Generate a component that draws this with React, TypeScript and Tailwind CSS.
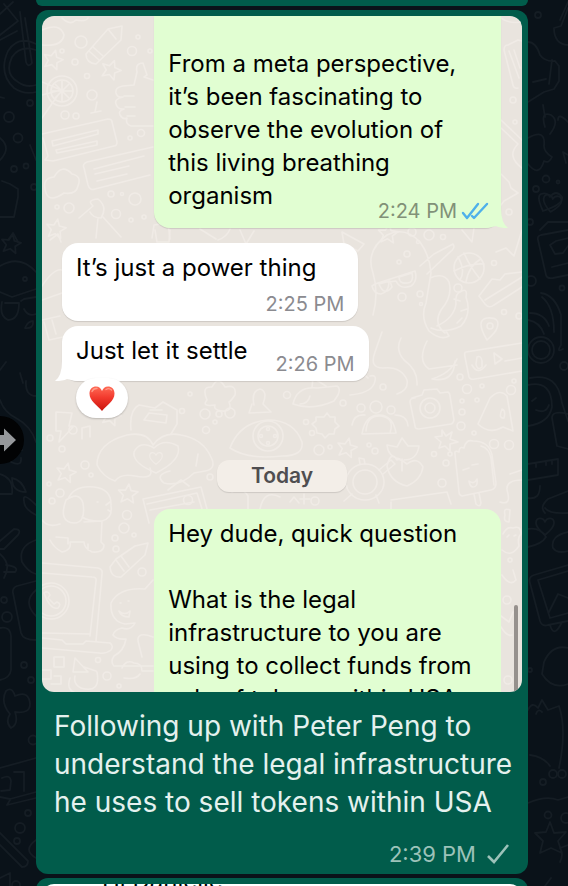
import type { ReactNode } from "react";

type Spot = [number, number, number?];

const STAR =
  "M0-10 2.8-3.6 9.8-3 4.5 1.6 6.2 8.4 0 4.8-6.2 8.4-4.5 1.6-9.8-3-2.8-3.6Z";
const HEART = "M0 9C-5 5-9 1-9-3-9-9-2-9 0-4 2-9 9-9 9-3 9 1 5 5 0 9Z";

function Dots({ spots }: { spots: Spot[] }) {
  return (
    <>
      {spots.map(([x, y, r], i) => (
        <circle key={i} cx={x} cy={y} r={r ?? 3} />
      ))}
    </>
  );
}

function Shapes({ d, spots }: { d: string; spots: Spot[] }) {
  return (
    <>
      {spots.map(([x, y, turn], i) => (
        <path key={i} d={d} transform={`translate(${x} ${y}) rotate(${turn ?? 0})`} />
      ))}
    </>
  );
}

function DarkWallpaper() {
  return (
    <svg
      aria-hidden="true"
      className="absolute inset-0 h-full w-full fill-none stroke-[#151d24]"
      viewBox="0 0 568 886"
      preserveAspectRatio="xMidYMin slice"
      strokeWidth="1.8"
      strokeLinecap="round"
      strokeLinejoin="round"
    >
      <path d="M0 14 13 2M0 35 18 21 4 4M20 12l6 50q2 6 6 1L25 18M0 40 17 31M36 44Q18 35 8 51-2 73 14 88q10 7 22 4M36 50Q20 45 12 57 4 74 18 82q8 6 18 3M0 97l4 1M0 138q12 10 0 22M2 181l8 3 8 5v8l-4 20H0M8 240l5-7 5 9M30 145l6 15" />
      <path d="M0 266q20-12 36 6M0 292l12 5 24-8M2 302q-3 14 6 18 11 0 11-17L5 303M21 301l3-2 12-2M24 309q4 8 12 5M25 328q3-7 8-7 1 8-8 7M0 370l6-8M20 373l3 10M36 396q-11 0-10-15M0 400q4 12 16 18 15 8 20 24M22 450q-14 0-11 12 11 5 10-4M0 474q14 4 12 20H0M12 478q10 2 14 14-14 0-14-14M36 505q-14-14-12-4 0 8 12 14M0 541l14-12q8 0 4 6L4 549H0M0 554q12 10 4 24M36 540q-18 6-14 22 6 10 14 12M6 565q14 2 9 7H4" />
      <path d="M36 581 17 586q-5 2-4 7l8 40q2 7 15 7M36 590q-14 12 0 26M0 628q10-2 11 8v34q-1 8-11 10M10 714Q0 702 6 691q6-5 9 5 14-6 15 8 0 10-15 8 4 12-4 16-6-6-1-14M0 768l36-10M0 797l10 2 26-7M2 778q8-4 9 3l-1 9-9 1M14 772h10v19M10 800l-3 5 29-7M0 845l22 22q6 0 6-6L0 833M0 878l10-5v13M36 840q-14 10 0 18" />
      <path d="M528 42q8 0 12 13 5 7 15 6l4 5v15l-5 8-10 3-16 10M533 82l13-3M552 60l-3 24M568 8l-7 18-7 2q0 16 14 17M568 2l-8 18M545 127q-5-16 6-12 9 6-1 19M568 122q-10-10-10-2M528 138q18-10 16 8 0 6 8 11-3 7-8 4-5 17-16 3M568 155l-5-3 3 11M543 211q-7-15-2-17 6-2 9 3 6-8 12 0 2 7-19 14M540 230l8-8h20" />
      <path d="M568 230l-27 5q-4 1-3 5l8 35q1 4 7 3l15-3M568 238l-12 3-6 4 5 9 8-1 5-7M552 267l16-4M541 293q14 2 20 22l0 30q-5 8 2 4M542 297q12 10 12 35M530 313q14 0 19 13M528 320q12 2 16 14M530 378q28-6 32 25l6 18M528 385q24-5 24 22-3 16-24 19M532 401l4-3M536 410q10 4 13-5M568 414q-16-4-16 4l5 28 11 3M528 464l30-5v16l-30 5M536 463v4M546 461v4M552 460v4M528 498q12 2 12-12M545 513q-6-6 3-14l20-8M545 508q4 6 23 5" />
      <path d="M528 547q14-3 18-10-6-10-18-8M568 532q-18 4-15 16 4 6 15 3M568 565l-34 10q-6 2-4 8l10 38q2 6 8 4l20-4M568 571l-30 9 12 38 18-5M549 612l9-18 10 4M550 625q4 14 12-3M568 648q-16-4-24 14l-2 12q10 16 26 10M528 710q4-9 10-2l4-8 6 10 11-4q8 24 0 62M536 714q2-6 6-2M530 755q14 2 20 11M528 803q18-8 30-3l10-3M550 822l4 11 12-1-8 9 4 12-11-5-11 5 3-12-8-8 11-1ZM560 862q4-8 0-14l8-3M551 878q-6 8-6 8M543 105l2 12" />
      <Shapes d={STAR} spots={[[11, 244, 10]]} />
      <Shapes d={HEART} spots={[[552, 203, 10], [545, 526]]} />
      <circle cx="541" cy="350" r="13" />
      <circle cx="541" cy="350" r="9" />
      <Dots
        spots={[
          [9, 117, 5], [30, 103], [18, 138, 4.5], [14, 169], [26, 166, 2.5], [34, 187], [4, 600], [7, 617, 5],
          [24, 665], [31, 680], [33, 740, 4.5], [28, 813], [20, 828, 5], [17, 841], [25, 279, 2], [16, 885, 4],
          [538, 15, 3], [546, 179, 3.5], [536, 189], [558, 182, 1.5], [530, 222], [531, 281, 5], [562, 288, 2.5],
          [564, 366, 4], [562, 774, 4], [543, 782], [553, 774, 4], [548, 815, 3.5], [566, 818, 5], [530, 670, 2],
        ]}
      />
    </svg>
  );
}

function LightWallpaper() {
  return (
    <svg
      aria-hidden="true"
      className="absolute inset-0 h-full w-full fill-none stroke-[#f0ebe6]"
      viewBox="42 16 480 676"
      preserveAspectRatio="xMidYMin slice"
      strokeWidth="1.6"
      strokeLinecap="round"
      strokeLinejoin="round"
    >
      {/* crayon, thumb, unicycle and chat notes */}
      <path d="M86 54l22-25 14-3-1 14-25 24q-10-1-10-10ZM89 51l10 9M93 47l10 9M108 29l8 10M62 18q8 8 14 2 10 2 12-2M42 30q18-8 22 5-2 12-22 10M153 80l-9-3 3-2-4-12q-8 0-6 9l-3 13-11 1q-8 1-7 7 1 5 7 4-9 2-7 7 2 6 8 5-6 2-4 6 3 5 7 3-2 6 4 8l22 0M124 96h10M125 107h10M127 116h8" />
      <circle cx="62" cy="91" r="15" />
      <circle cx="62" cy="91" r="11" />
      <path d="M62 81v20M52 91h20M55 84l14 14M69 84 55 98M42 82l19 8-19 5M58 95 42 118M97 102l-2 10M91 113l10-2M42 134l66-15q4 0 4 3l5 20q0 4-3 4l-61 15-8-1 3-4-5-18M52 141l46-11v4l-45 12ZM56 150l41-9v4l-40 8ZM153 147l-66 15q-5 2-3 6l4 17q2 6 7 4l55-14M94 169l50-13M95 174l34-8M97 181l30-7M46 193q-5-15 8-16 8-14 18-3 10 2 6 12-2 9-14 7-14 10-18 0M79 218l14-12q-7-6 5-7 10 8 3 19-8 0-11-6M98 218l-2 20M103 217l18 20M152 238l2-13 14-2 2 16" />
      {/* right edge beside the outgoing bubble */}
      <path d="M501 18q8 6 21 4M508 45l10-5 4 1M508 45q-4 0-4 5l9 35q1 4 5 3M509 51l10 27M514 50l6 18M501 120l21 20M501 128l17 16q-12 12 4 24M501 174l8 8 2 6 7 5-14 8-3 4M200 229l16 10M230 229q-3 8-12 11" />
      {/* slice, octopus with glasses, ball and shoe */}
      <path d="M342 232l22 12-6 7-14-7ZM462 230l10 12 2-14M496 252l10-4 8 8 8-26M373 315q6-22 0-42-8-22 14-38 18-9 33 7 10 14 11 31l-5 30q-6 14 3 28 12 10 20 5M375 284l40-13q3 10-4 15-11 4-15-5l-7 1q0 10-8 12-7 0-9-8ZM379 284l11-3 2 6q-8 10-13-3M399 277l13-4q2 10-5 10-8 1-8-6M420 266l14-12 19-10q3 4-4 9l-22 21M430 278q14-6 19 4 4 14-8 28-8 14 4 23M431 328q14 6 30-2 11-12 5-29 2-10-6-5-5 2-4 12-2 14-19 22M454 299l6 2M461 311l6-2M457 323l5-5M449 336l-3-5M382 332l-7 20q-6 16 8 16 18-2 24 12 2 10-10 14M401 338q-6 12 3 22 14 10 13 25M368 364q-8 8 0 14M350 395q20-2 24-11 4-10-4-8M427 341q-10 20 2 28l28-4M457 359q-6 14-25 20 22 4 23-18" />
      <circle cx="469" cy="268" r="15" />
      <path d="M454 271q16-8 30-7M464 253q6 14 16 26M458 257q8 14 2 23M481 259q-12 6-15 23M479 296l13-17 8 1 5-6 17-2M479 296l6 8q4 5 9 1l28-18M485 300l37-23M487 340q-12-20 0-22 14-1 10 10-1 4-10 12M522 343l-56 9q-2 0-1 5l4 20q1 3 6 2l47-8M494 353l8 6-7 5ZM477 357q4-2 5 4v6q-5 4-6-3ZM472 365q6 11 14 0M505 361l17-3" />
      <circle cx="490" cy="326" r="3" />
      {/* left margin */}
      <path d="M42 320l18-4M44 322l5 18 14-3M52 320l4 14M42 286q12-18 20-16M42 300l20-7M50 240l8-6 3 8M155 230l2 12 12 0 1-12M240 230l6 14 8-13" />
      {/* fish, friends, camera and bell */}
      <path d="M293 404q4-18 24-16l20-2q4 2 1 9l-4 6q-22 10-41 3M312 387l1-9 13 8M300 404q8 0 10-8M366 431q1-16 15-15 14 2 9 17M362 434q3-19 17-19t17 18ZM352 425q2-11 13-10M395 415q12 0 13 11M412 398l10-3 2-5 13-1 3 4 8-1q2 1 2 4l4 24q-1 4-3 4l-32 5q-4 0-4-3l-5-24q0-4 5-4M478 424l12-26q10-10 17-2l6 35-10-4q-14 8-25-3M502 409q4 1 2 9-6 1-2-9M131 430q-2-20 8-25l16 3 8-6 14 8v14l-6 10M207 400q-6-14 5-13 6-12 13 0 12-3 10 8-4 6-6 7 4 10-7 9-9-1-7-6-14 2-8-5M150 410h12M144 420l22 3 1-8-18-2ZM56 412l16 1-3 13 4 1-14 15 2-11-5 0ZM82 428l8-2v11M82 428v11M254 405q-3-14 6-16 8 2 3 15l8 8-22 1 3-9" />
      <circle cx="376" cy="407" r="6" />
      <circle cx="361" cy="408" r="4" />
      <circle cx="391" cy="410" r="4" />
      <circle cx="430" cy="408" r="10" />
      <circle cx="430" cy="408" r="5" />
      <circle cx="268" cy="436" r="15" />
      <circle cx="268" cy="436" r="10" />
      <Dots spots={[[268, 429, 1.5], [275, 436, 1.5], [261, 436, 1.5], [268, 443, 1.5]]} />
      <path d="M230 448q10-26 38-28 26 0 34 22 2 14-20 14-34 4-52-8M324 417l3-4 3 4 5 0 0 5 4 4-4 3-1 5-5 0-4 4-3-4-5-1-1-5-4-4 4-3 0-4ZM442 430l4 6 6-4-2 7 8 3-8 2 0 7-5-5-6 2 2-6-6-5 7-1ZM400 459q-12-2-13-14l10 2 5-9 6 8 11 0q-2 14-15 14M402 459v12M397 460q-6-10-10 6 3 16 20 20 14-6 16-19-6-11-16-3-8-6-10-4" />
      {/* hands holding a heart */}
      <path d="M97 465q0-22 30-30 20-4 26 10 10-14 28-10 22 4 30 22 6 12-6 14l-11 2q-14 14-30 10-10-8 6-12M97 465q6 12 18 16 6-8 20-5 20 4 15-8" />
      <path d={HEART} transform="translate(156 458) scale(.7)" />
      <path d="M134 452q6-12 20-4 10-10 24-2 4 14-22 27-24-10-22-21" />
      {/* puppy, easel, lifebuoy, ice lolly */}
      <path d="M68 499q6-14 26-12 18 2 17 19 2 12-9 15-12 1-20-4M66 500q-8 22 8 23 12 0 9-20-4-12-17-3M97 502h1M106 505l4-3M108 510l3 2M42 520q6 8 18 4M84 522l18-1-1 21 3 3q0 8-12 7-8-4-8-10l-14 0q2 8-8 10-8-4-12-12M56 537l12 1v6M88 544v6M143 499l58-12 6 22M147 504l50-11 5 16M143 499l6 24M168 490l13-10 8 6M150 510l44-8" />
      <ellipse cx="365" cy="482" rx="19" ry="18" />
      <ellipse cx="365" cy="482" rx="12" ry="12" />
      <path d="M360 464l-1-6 5 1 1 5M379 470l12-10 4 4-12 10M347 475l-8-3M352 494l-8 7M376 495l3 8M459 492l-4-38q-1-4 4-2 0-6 5-4 2-9 9-7 16 0 19 14l4 28q0 6-5 7l-29 6q-3-1-3-4ZM481 446q8 2 10 12l3 27M463 470l6-2M472 465l6-1M469 481q5 4 8-2 1 8-4 8-3 0-4-6M474 494l2 10q4 4 5-1l-2-10M391 500l56-8 4 12M391 502v7M510 474l12-4M522 480q-16 0-15 10 5 16-7 12" />
      <path d="M505 515q-2-8 5-5l-1 12q-6 0-4-7M503 534q4-8 10-6 8-3 8 6-4 4-2 12-8 12-17 4M507 537l2-2M514 536l2-1M502 575q8 12 14 5l-3-10M501 616l8 6 4-10M501 627q6 10 11 8" />
      {/* crayon, laptop and ghost */}
      <path d="M110 567l6-8 19-13 13-3-3 12-24 22q-10 1-11-10ZM116 560l8 11M121 556l8 11M42 563l56 5q5 1 4 6l-6 67M42 573l50 4q5 0 4 4l-6 55M42 633l48 1M42 638l20 2 4 4 17 0 3-3 24 2q4 3 1 7-5 4-12 3l-57-5" />
      <circle cx="51" cy="601" r="18" />
      <circle cx="51" cy="601" r="15" />
      <path d="M44 593q4-3 6 2l-2 3 6 6 3-2q5 2 1 6-8 2-14-15M153 580l-8 9q-26-2-34 14-1 18 14 21l10-1q-4 8-13 5-8 2-9 7 4 5 13 4-2 12-12 17-4 6 0 10h39M120 603h1M128 601h1M119 611q6 5 11 0l-1 6q-8 0-10-6M153 637q-16-6-15 4l4 16M54 657h10v10H54ZM42 670h9v9h-9M51 684l10 0 0-8-7 0M75 658l13 14-15 0ZM84 667l12 4M70 678q-5 14 10 16M97 672q4 22-16 16M75 676q-2 8 6 12M122 668q4-9 12-5 8 0 8 8h11M124 678q12 2 16-4" />
      <path d="M198 454l-2 12M222 464l4 24M232 492q10-6 16 4v13M260 509q4-20 20-12M290 502l4-5 5 6M300 499h10M304 494v10" />
      <Shapes
        d={STAR}
        spots={[
          [53, 60, 15], [111, 70, 20], [56, 229, 10], [388, 234, 5], [347, 448, 12], [66, 473, 12],
          [128, 494, 5], [111, 416, 15],
        ]}
      />
      <Dots
        spots={[
          [81, 42, 6], [132, 51, 4.5], [75, 62, 3], [62, 51, 2], [138, 37, 2], [150, 51, 2], [87, 76, 2.5],
          [92, 95, 5], [65, 115, 4], [76, 116, 3], [130, 138, 2], [141, 133, 3.5], [135, 199, 6], [111, 194, 3],
          [122, 194, 1.5], [69, 208, 5], [116, 214, 4.5], [57, 207, 2], [131, 220, 2], [144, 217, 2], [513, 100, 3],
          [515, 122, 2], [509, 212, 3], [412, 232, 4], [429, 235, 5], [418, 242, 1.5], [443, 237, 2.5],
          [458, 288, 4], [494, 263, 2.5], [504, 312, 2.5], [519, 316, 3], [407, 254, 3], [399, 262, 2], [420, 294, 3],
          [421, 304, 1.5], [402, 297, 4], [287, 395, 3.5], [343, 403, 3], [383, 387, 3], [460, 377, 3],
          [467, 389, 4.5], [482, 386, 2], [511, 390, 4.5], [514, 381, 2], [462, 401, 2], [462, 412, 3],
          [477, 400, 2], [461, 426, 4], [474, 433, 2], [306, 422, 2.5], [312, 433, 2.5], [205, 414, 5],
          [219, 414, 3], [230, 413, 5], [215, 422, 2], [206, 430, 3.5], [182, 411, 2.5], [190, 394, 2],
          [73, 430, 4], [50, 438, 3], [62, 449, 3], [85, 465, 4], [49, 484, 2], [60, 493, 4], [52, 501, 3],
          [91, 475, 2], [319, 450, 5], [330, 447, 2], [369, 445, 2], [375, 451, 3], [434, 454, 2.5], [494, 444, 4.5],
          [509, 445, 4.5], [446, 463, 3], [442, 483, 4], [450, 454, 2], [315, 501, 4], [127, 515, 4.5],
          [124, 528, 5], [115, 538, 3], [134, 535, 2], [116, 549, 3], [142, 572, 4], [188, 500, 4.5], [107, 676, 4],
          [119, 686, 2], [98, 660, 2.5], [510, 560, 2], [507, 600, 4], [508, 680, 4], [210, 477, 3],
        ]}
      />
    </svg>
  );
}

function Body({ children }: { children: ReactNode }) {
  return <p className="whitespace-pre text-2xl/[33px]">{children}</p>;
}

function Stamp({ children }: { children: ReactNode }) {
  return <time className="text-xl/6 text-[#8b8b90]">{children}</time>;
}

function DoubleTick() {
  return (
    <svg
      role="img"
      aria-label="Read"
      className="h-5 w-7 fill-none stroke-[#4fb0ea]"
      viewBox="0 0 28 20"
      strokeWidth="2.4"
      strokeLinecap="round"
      strokeLinejoin="round"
    >
      <path d="M2 12l4 5L17 3M11 15l2 2L26 3" />
    </svg>
  );
}

function EmojiHeart() {
  return (
    <svg role="img" aria-label="Red heart" className="h-[25px] w-[26px]" viewBox="0 0 26 25">
      <defs>
        <linearGradient id="heart" x1="0" y1="0" x2="0" y2="1">
          <stop offset="0" stopColor="#ff6a55" />
          <stop offset=".45" stopColor="#f23a2e" />
          <stop offset="1" stopColor="#c9140c" />
        </linearGradient>
      </defs>
      <path
        d="M13 25C8 19 .5 15 .5 7.500.5 3 3.500.5 7 .5c3 0 5 1.800 6 4.500 1-2.700 3-4.500 6-4.500 3.500 0 6.500 2.500 6.500 7C25.500 15 18 19 13 25Z"
        fill="url(#heart)"
      />
      <path d="M3 5.500Q4.500 2 8 2.500M17 3.500Q20 1.500 22.500 4" fill="none" stroke="#ff9a88" strokeWidth="1.400" strokeLinecap="round" />
    </svg>
  );
}

function SharedScreenshot() {
  return (
    <div className="relative aspect-[120/169] w-full overflow-hidden rounded-xl bg-[#e9e4de] text-black">
      <LightWallpaper />
      <div className="relative flex flex-col items-start pr-[21px] pl-5">
        <div className="relative w-[79%] self-end rounded-b-2xl bg-[#e1fed2] pt-[31px] pr-3 pb-[5px] pl-3.5 shadow-[0_1px_1px_#0000001f]">
          <svg aria-hidden="true" className="absolute -right-[7px] bottom-0 h-5 w-6 fill-[#e1fed2]" viewBox="0 0 24 20">
            <path d="M8 0h9q0 15 7 20-8 0-12-2-6 2-12 2Z" />
          </svg>
          <Body>{"From a meta perspective,\nit’s been fascinating to\nobserve the evolution of\nthis living breathing"}</Body>
          <div className="relative flex items-start justify-between">
            <Body>organism</Body>
            <div className="mt-5 flex items-center gap-1">
              <time className="text-xl/6 text-[#819178]">2:24 PM</time>
              <DoubleTick />
            </div>
          </div>
        </div>

        <div className="mt-[15px] flex flex-col rounded-2xl bg-white px-3.5 pt-2 pb-[5px] shadow-[0_1px_1px_#0000001f]">
          <div className="pr-7">
            <Body>It’s just a power thing</Body>
          </div>
          <div className="mt-2 flex justify-end">
            <Stamp>2:25 PM</Stamp>
          </div>
        </div>

        <div className="relative mt-[5px] flex items-end gap-7 rounded-2xl bg-white px-3.5 pt-2 pb-[5px] shadow-[0_1px_1px_#0000001f]">
          <svg aria-hidden="true" className="absolute bottom-0 -left-[7px] h-5 w-6 fill-white" viewBox="0 0 24 20">
            <path d="M16 0H7q0 15-7 20 8 0 12-2 6 2 12 2Z" />
          </svg>
          <div className="relative pb-[9px]">
            <Body>Just let it settle</Body>
          </div>
          <Stamp>2:26 PM</Stamp>
        </div>

        <div className="relative -mt-[3px] ml-3.5 flex h-10 w-[52px] items-center justify-center rounded-full bg-white shadow-[0_1px_2px_#00000033]">
          <EmojiHeart />
        </div>

        <div className="mt-[42px] ml-px self-center rounded-xl bg-[#f3eee8] px-[34px] text-[21px]/8 font-semibold text-[#4f4e50] shadow-[0_1px_1px_#0000001f]">
          Today
        </div>

        <div className="mt-[17px] w-[79%] self-end rounded-t-2xl bg-[#e1fed2] px-3.5 pt-2">
          <Body>{"Hey dude, quick question\n\nWhat is the legal\ninfrastructure to you are\nusing to collect funds from\nsale of tokens within USA"}</Body>
        </div>
      </div>
      <div className="absolute right-1 bottom-0 h-[87px] w-1 rounded-t-full bg-[#96918d]" />
    </div>
  );
}

export default function App() {
  return (
    <main className="relative h-screen overflow-hidden bg-[#0a1219] font-['Inter',sans-serif]">
      <DarkWallpaper />
      <div className="relative flex flex-col gap-1 pr-10 pl-9">
        <div className="h-1.5 rounded-b-xl bg-[#015c4b]" />

        <article className="relative rounded-xl bg-[#015c4b] p-1.5">
          <button
            type="button"
            aria-label="Forward message"
            className="absolute top-[406px] -left-15 flex size-12 items-center justify-end rounded-full bg-[#020304] pr-2"
          >
            <svg aria-hidden="true" className="h-6 w-7 fill-[#96999c]" viewBox="0 0 28 24">
              <path d="M0 7h16V0.500L28 12 16 23.500V17H0Z" />
            </svg>
          </button>
          <SharedScreenshot />
          <div className="pt-[15px] pr-2 pl-3">
            <p className="text-[28px]/[38px] text-[#e4f1ee]">
              Following up with Peter Peng to understand the legal infrastructure he uses to sell tokens within USA
            </p>
            <div className="mt-[21px] flex items-center justify-end gap-2.5 pr-1 pb-0.5">
              <time className="text-[22px]/6 text-[#9cc2b9]">2:39 PM</time>
              <svg
                role="img"
                aria-label="Sent"
                className="h-5 w-6 fill-none stroke-[#9cc2b9]"
                viewBox="0 0 24 20"
                strokeWidth="2.600"
              >
                <path d="M2 12l6 6L22 1" />
              </svg>
            </div>
          </div>
        </article>

        <article className="rounded-t-xl bg-[#015c4b] p-1.5">
          <div className="h-40 overflow-hidden rounded-xl bg-white px-[60px] text-black">
            <p className="-mt-5 text-2xl/[33px]">Hi Danielle,</p>
          </div>
        </article>
      </div>
    </main>
  );
}
